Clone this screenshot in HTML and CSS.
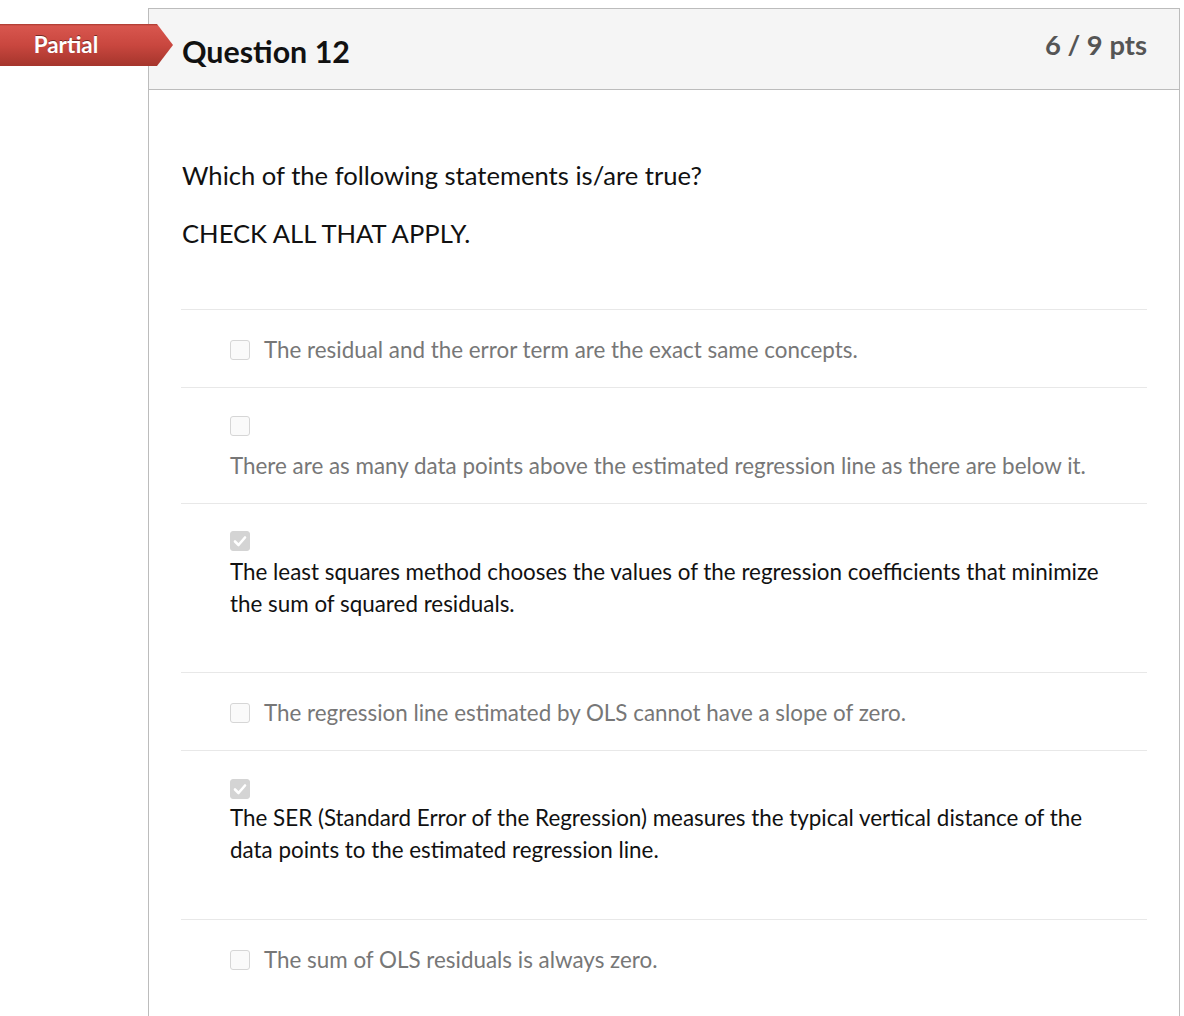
FILE: index.html
```html
<!DOCTYPE html>
<html lang="en">
<head>
<meta charset="utf-8">
<title>Question 12</title>
<link rel="stylesheet" href="styles.css">
</head>
<body>
<div class="page">
  <div class="banner">Partial</div>
  <div class="card">
    <div class="card-header">
      <h2 class="title">Question 12</h2>
      <div class="pts">6 / 9 pts</div>
    </div>
    <div class="card-body">
      <p class="q-text">Which of the following statements is/are true?</p>
      <p class="q-text q-sub">CHECK ALL THAT APPLY.</p>
      <div class="answers">
        <div class="answer inline">
          <span class="box"></span>
          <span class="a-text">The residual and the error term are the exact same concepts.</span>
        </div>
        <div class="answer stacked">
          <span class="box"></span>
          <div class="a-text">There are as many data points above the estimated regression line as there are below it.</div>
        </div>
        <div class="answer stacked selected">
          <span class="box checked"><svg viewBox="0 0 20 20" width="20" height="20"><path d="M5 10.5 L8.5 14 L15 6.5" fill="none" stroke="#fff" stroke-width="2.6" stroke-linecap="round" stroke-linejoin="round"/></svg></span>
          <div class="a-text">The least squares method chooses the values of the regression coefficients that minimize the sum of squared residuals.</div>
        </div>
        <div class="answer inline">
          <span class="box"></span>
          <span class="a-text">The regression line estimated by OLS cannot have a slope of zero.</span>
        </div>
        <div class="answer stacked selected sel2">
          <span class="box checked"><svg viewBox="0 0 20 20" width="20" height="20"><path d="M5 10.5 L8.5 14 L15 6.5" fill="none" stroke="#fff" stroke-width="2.6" stroke-linecap="round" stroke-linejoin="round"/></svg></span>
          <div class="a-text">The SER (Standard Error of the Regression) measures the typical vertical distance of the data points to the estimated regression line.</div>
        </div>
        <div class="answer inline">
          <span class="box"></span>
          <span class="a-text">The sum of OLS residuals is always zero.</span>
        </div>
      </div>
    </div>
  </div>
</div>
</body>
</html>
```

FILE: styles.css
```css
* { box-sizing: border-box; }
html, body { margin: 0; padding: 0; background: #fff; }
body {
  font-family: Lato, "Open Sans", "Liberation Sans", sans-serif;
  color: #111;
  overflow: hidden;
}
.page {
  position: relative;
  padding: 8px 4px 0 148px;
  height: 1016px;
}
.banner {
  position: absolute;
  left: 0;
  top: 24px;
  width: 173px;
  height: 42px;
  padding-right: 41px;
  color: #fff;
  font-weight: 700;
  font-size: 22.4px;
  line-height: 42px;
  text-align: center;
  text-shadow: 0 -1px 0 rgba(0,0,0,0.45);
  background: linear-gradient(to bottom, #a8392f 0, #d8564e 2px, #c9473f 50%, #a5352c 100%);
  clip-path: polygon(0 0, 157px 0, 173px 21px, 157px 42px, 0 42px);
  z-index: 2;
}
.card {
  border: 1px solid #bcbcbc;
  border-bottom: none;
  height: 1008px;
}
.card-header {
  display: flex;
  justify-content: space-between;
  align-items: flex-start;
  height: 81px;
  background: #f5f5f5;
  border-bottom: 1px solid #bcbcbc;
  padding: 0 32px 0 33px;
}
.title {
  margin: 25px 0 0;
  font-size: 30.4px;
  line-height: 34px;
  font-weight: 700;
  color: #111;
}
.pts {
  margin-top: 21px;
  font-size: 27.4px;
  line-height: 30px;
  font-weight: 700;
  color: #555;
}
.card-body {
  padding: 67px 32px 0 32px;
}
.q-text {
  margin: 0;
  padding-left: 1px;
  font-size: 25.6px;
  line-height: 36px;
  color: #111;
}
.q-sub {
  margin-top: 22px;
  margin-bottom: 58px;
}
.answer {
  border-top: 1px solid #e8e8e8;
  padding-left: 49px;
  font-size: 22.4px;
  color: #777;
}
.answer .a-text { max-width: 885px; }
.answer.inline {
  display: flex;
  align-items: center;
  gap: 14px;
  padding-top: 25px;
  padding-bottom: 22px;
  line-height: 30px;
}
.answer.stacked {
  padding-top: 28px;
  padding-bottom: 22px;
  line-height: 30px;
}
.answer.stacked .box {
  display: block;
  margin-bottom: 15px;
}
.answer.selected {
  color: #111;
  line-height: 32px;
  padding-top: 27px;
  padding-bottom: 52px;
}
.answer.selected .box { margin-bottom: 5px; }
.answer.sel2 { padding-top: 28px; padding-bottom: 53px; }
.answer.sel2 .box { margin-bottom: 3px; }
.box {
  flex: none;
  width: 20px;
  height: 20px;
  border: 1px solid #d6d6d6;
  border-radius: 3px;
  background: #fafafa;
}
.box.checked {
  background: #d4d4d4;
  border-color: #d4d4d4;
  position: relative;
}
.box.checked svg {
  display: block;
  margin: -1px 0 0 -1px;
}
```
